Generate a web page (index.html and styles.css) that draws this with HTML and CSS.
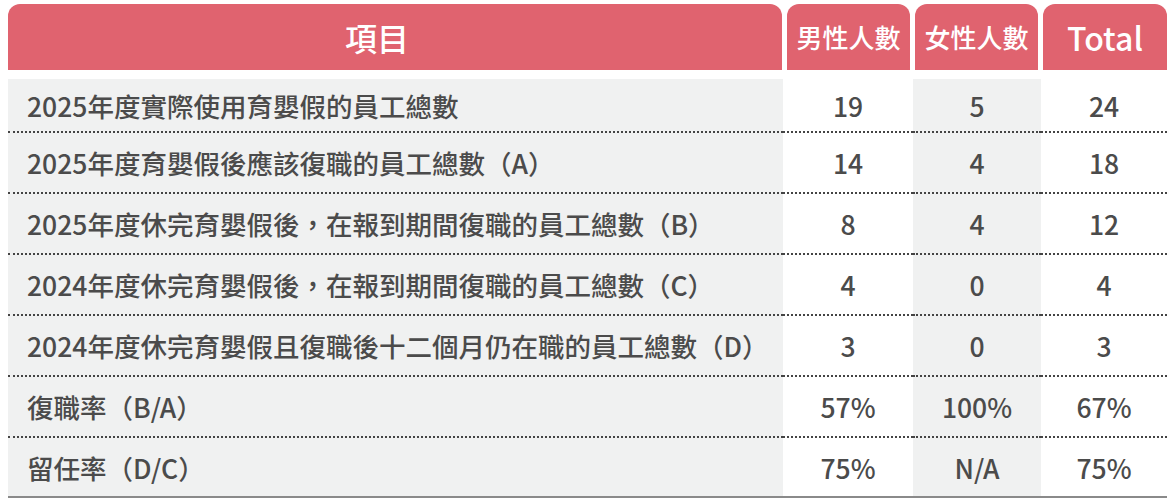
FILE: index.html
```html
<!DOCTYPE html>
<html lang="zh-Hant">
<head>
<meta charset="utf-8">
<link rel="stylesheet" href="styles.css">
</head>
<body>
<div class="table">
  <div class="head">
    <div class="hcell h-item">項目</div>
    <div class="hcell h-m">男性人數</div>
    <div class="hcell h-f">女性人數</div>
    <div class="hcell h-t">Total</div>
  </div>
  <div class="rows">
    <div class="row first">
      <div class="cell label">2025年度實際使用育嬰假的員工總數</div>
      <div class="cell num">19</div>
      <div class="cell num grey">5</div>
      <div class="cell num">24</div>
    </div>
    <div class="row">
      <div class="cell label">2025年度育嬰假後應該復職的員工總數（A）</div>
      <div class="cell num">14</div>
      <div class="cell num grey">4</div>
      <div class="cell num">18</div>
    </div>
    <div class="row">
      <div class="cell label">2025年度休完育嬰假後，在報到期間復職的員工總數（B）</div>
      <div class="cell num">8</div>
      <div class="cell num grey">4</div>
      <div class="cell num">12</div>
    </div>
    <div class="row">
      <div class="cell label">2024年度休完育嬰假後，在報到期間復職的員工總數（C）</div>
      <div class="cell num">4</div>
      <div class="cell num grey">0</div>
      <div class="cell num">4</div>
    </div>
    <div class="row">
      <div class="cell label">2024年度休完育嬰假且復職後十二個月仍在職的員工總數（D）</div>
      <div class="cell num">3</div>
      <div class="cell num grey">0</div>
      <div class="cell num">3</div>
    </div>
    <div class="row">
      <div class="cell label">復職率（B/A）</div>
      <div class="cell num">57%</div>
      <div class="cell num grey">100%</div>
      <div class="cell num">67%</div>
    </div>
    <div class="row last">
      <div class="cell label">留任率（D/C）</div>
      <div class="cell num">75%</div>
      <div class="cell num grey">N/A</div>
      <div class="cell num">75%</div>
    </div>
  </div>
</div>
</body>
</html>
```

FILE: styles.css
```css
html, body {
  margin: 0;
  padding: 0;
  background: #ffffff;
}
body {
  font-family: "Noto Sans CJK TC", "Noto Sans", sans-serif;
  color: #4b4b4b;
}
.table {
  width: 1159px;
  margin: 4px 0 0 8px;
}
.head {
  display: flex;
  gap: 5px;
  height: 66px;
}
.hcell {
  box-sizing: border-box;
  background: #e0636f;
  color: #ffffff;
  border-radius: 12px 12px 0 0;
  display: flex;
  align-items: center;
  justify-content: center;
  font-weight: 500;
  line-height: 1;
}
.h-item {
  width: 774px;
  font-size: 32px;
  padding-right: 36px;
}
.h-m, .h-f {
  width: 123px;
  font-size: 26px;
}
.h-t {
  width: 124px;
  font-size: 32px;
}
.rows {
  margin-top: 9px;
}
.row {
  display: grid;
  grid-template-columns: 775px 130px 128px 126px;
  height: 61px;
}
.row.first {
  height: 54px;
}
.row.last {
  height: 60px;
}
.cell {
  box-sizing: border-box;
  border-bottom: 2px dotted #444444;
  display: flex;
  align-items: center;
  font-size: 26.5px;
  font-weight: 500;
  line-height: 1;
  padding-top: 2px;
}
.row.last .cell {
  border-bottom: 2px solid #8a8a8a;
}
.label {
  background: #f0f1f1;
  padding-left: 19px;
}
.num {
  justify-content: center;
}
.grey {
  background: #f0f1f1;
}
```
